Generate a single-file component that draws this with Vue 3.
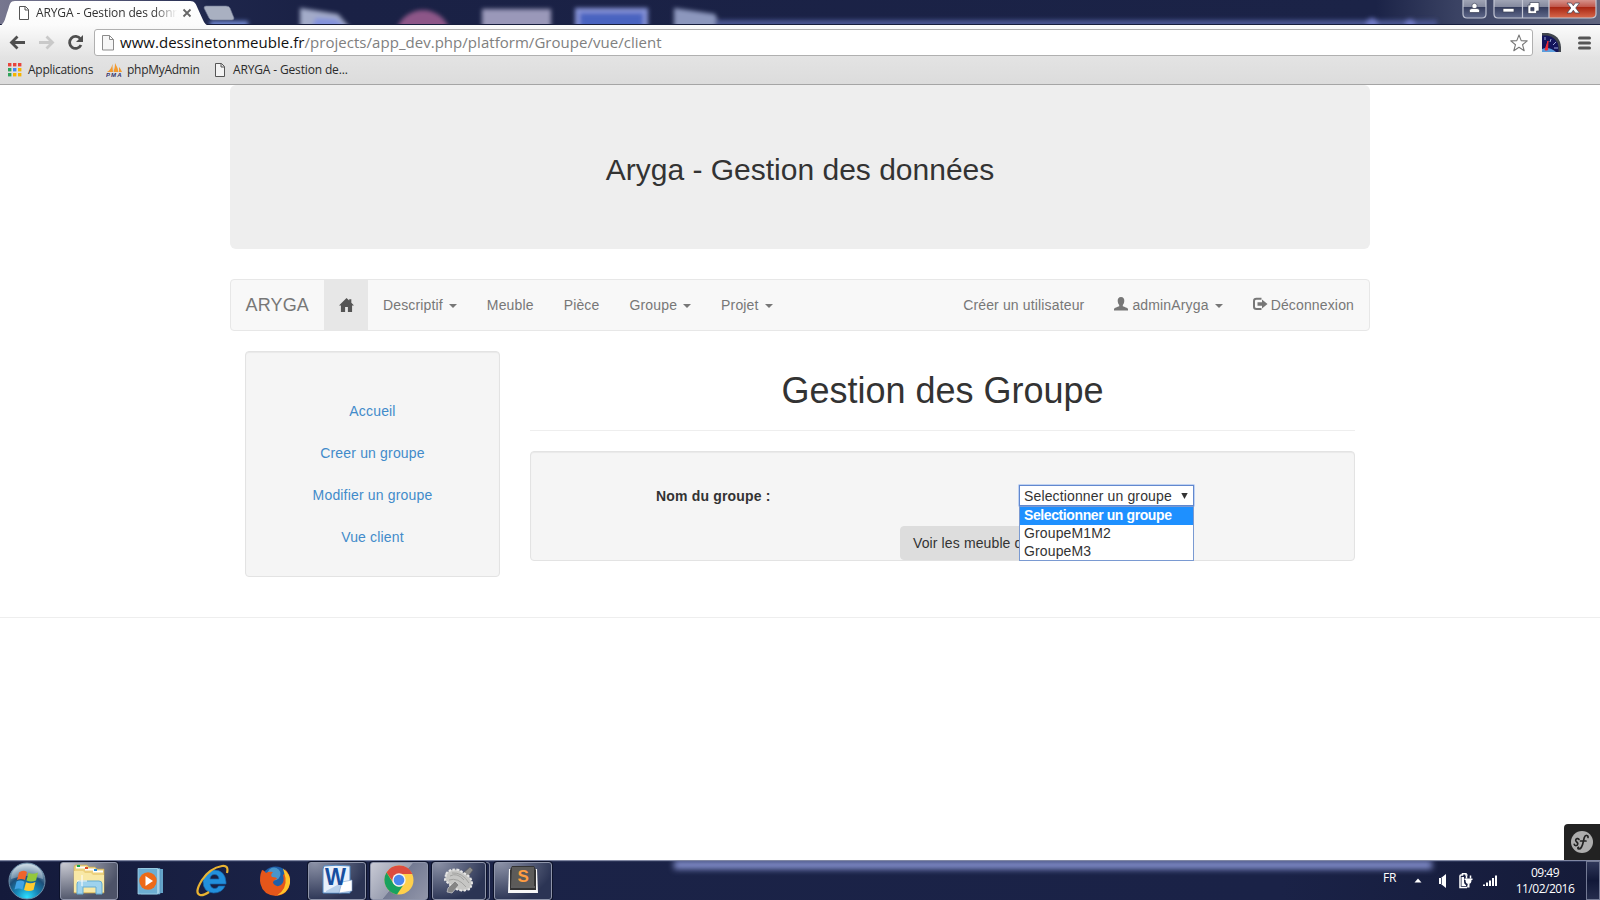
<script setup>
const links = ['Accueil', 'Creer un groupe', 'Modifier un groupe', 'Vue client']
const menus = [
  { label: 'Descriptif', caret: true },
  { label: 'Meuble', caret: false },
  { label: 'Pièce', caret: false },
  { label: 'Groupe', caret: true },
  { label: 'Projet', caret: true },
]
const options = ['Selectionner un groupe', 'GroupeM1M2', 'GroupeM3']
const appColors = ['#e8453c', '#e8453c', '#e8453c', '#2fa35a', '#4285f4', '#f5b400', '#2fa35a', '#f5b400', '#f5b400']
</script>

<template>
  <div class="screen">
    <header class="titlebar">
      <svg class="aero" width="1600" height="25" viewBox="0 0 1600 25">
        <defs>
          <linearGradient id="aeroBg" x1="0" x2="1" y1="0" y2="0">
            <stop offset="0" stop-color="#77778f" />
            <stop offset=".06" stop-color="#5b5d7c" />
            <stop offset=".13" stop-color="#1e264b" />
            <stop offset=".2" stop-color="#1a2145" />
            <stop offset=".86" stop-color="#1b2347" />
            <stop offset=".91" stop-color="#3a4263" />
            <stop offset="1" stop-color="#60657f" />
          </linearGradient>
          <filter id="soft" x="-20%" y="-50%" width="140%" height="200%"><feGaussianBlur stdDeviation="2.2" /></filter>
        </defs>
        <rect width="1600" height="25" fill="url(#aeroBg)" />
        <g filter="url(#soft)">
          <rect x="210" y="21" width="38" height="8" fill="#6f86cf" />
          <path d="M300 8 L338 14 L352 30 H300Z" fill="#a3abc9" />
          <path d="M316 18 L336 19 L348 30 H310Z" fill="#8493dc" />
          <circle cx="423" cy="38" r="28" fill="#8d5688" />
          <rect x="482" y="9" width="69" height="22" fill="#9a98b9" />
          <rect x="575" y="8" width="73" height="24" fill="#8592d6" />
          <rect x="580" y="13" width="63" height="16" fill="#4a63c0" />
          <path d="M674 8 L715 14 L722 30 H674Z" fill="#8c97bd" />
          <rect x="715" y="20" width="722" height="8" fill="#4a5590" />
          <circle cx="1372" cy="24" r="6" fill="#6e78c4" /><circle cx="1410" cy="24" r="5" fill="#6e78c4" />
        </g>
        <rect y="24" width="1600" height="1" fill="#161d3c" />
      </svg>
      <svg class="tabs" width="250" height="26" viewBox="0 0 250 26">
        <defs><linearGradient id="tabBg" x1="0" x2="0" y1="0" y2="1"><stop offset="0" stop-color="#fff" /><stop offset="1" stop-color="#fbfbfb" /></linearGradient></defs>
        <path d="M0 26 C5 23 5 18 8 10 C10 4 10 1 15 1 H190 C195 1 196 4 198 9 L203 20 Q205 25 209 26Z" fill="url(#tabBg)" />
        <path d="M206 6 H226 Q229 6 230 8 L234 18 Q234 20 232 20 H213 Q210 20 209 18 L204 8 Q204 6 206 6Z" fill="#a9b0c1" stroke="#6d7590" stroke-width=".6" />
        <path d="M19.500 6.500 H25.500 L28.500 9.500 V19.500 H19.500Z M25 6.500 V10 H28.500" fill="#fff" stroke="#555" />
        <path d="M183.500 9.500 L190.500 16.500 M190.500 9.500 L183.500 16.500" stroke="#666" stroke-width="1.800" />
      </svg>
      <span class="tab-title">ARYGA - Gestion des donn</span>
      <svg class="winctl" width="138" height="20" viewBox="0 0 138 20">
        <defs>
          <linearGradient id="glass" x1="0" x2="0" y1="0" y2="1"><stop offset="0" stop-color="#a4a8b8" /><stop offset=".42" stop-color="#84899e" /><stop offset=".43" stop-color="#343c5d" /><stop offset="1" stop-color="#60698b" /></linearGradient>
          <linearGradient id="closeBg" x1="0" x2="0" y1="0" y2="1"><stop offset="0" stop-color="#d99a94" /><stop offset=".42" stop-color="#c0564a" /><stop offset=".43" stop-color="#a82512" /><stop offset="1" stop-color="#d8694c" /></linearGradient>
        </defs>
        <path d="M2 -1 V14 Q2 18 6 18 H21 Q25 18 25 14 V-1Z" fill="url(#glass)" stroke="#bfc3d2" stroke-width="1.200" />
        <path d="M33 -1 V14 Q33 18 37 18 H130 Q135 18 135 14 V-1Z" fill="url(#glass)" />
        <path d="M88 -1 H135 V14 Q135 18 130 18 H88Z" fill="url(#closeBg)" />
        <path d="M33 -1 V14 Q33 18 37 18 H130 Q135 18 135 14 V-1 M61.500 0 V18 M88 0 V18" fill="none" stroke="#c4c7d4" stroke-width="1.200" />
        <g fill="#fff" stroke="#3c4258" stroke-width=".7">
          <circle cx="13.500" cy="6" r="2.700" /><path d="M8.500 12.500 V10.500 Q8.500 8.500 11 8.500 H16 Q18.500 8.500 18.500 10.500 V12.500Z" />
          <rect x="42" y="8.500" width="11" height="3.500" />
          <path fill-rule="evenodd" d="M69 2.500 H78 V11 H75.500 V13.500 H67 V5 H69Z M69.800 7.500 V10.800 H73 V7.500Z" />
          <path d="M106 3 H110.300 L112.300 5.800 L114.300 3 H118.500 L114.700 8 L118.500 13 H114.300 L112.300 10.200 L110.300 13 H106 L109.900 8Z" />
        </g>
      </svg>
    </header>

    <div class="toolbar">
      <div class="address-row">
        <svg class="navs" width="94" height="28" viewBox="0 0 94 28">
          <path d="M25 14.500 H12 M17.500 8.500 L11.500 14.500 L17.500 20.500" fill="none" stroke="#4f4f4f" stroke-width="2.800" />
          <path d="M39 14.500 H52 M46.500 8.500 L52.500 14.500 L46.500 20.500" fill="none" stroke="#c9c9c9" stroke-width="2.800" />
          <path d="M80.500 11 A6 6 0 1 0 81 17" fill="none" stroke="#4f4f4f" stroke-width="2.800" />
          <path d="M83 7 V14 H76Z" fill="#4f4f4f" />
        </svg>
        <div class="omnibox">
          <svg width="12" height="16" viewBox="0 0 12 16"><path d="M.5 .5 H7.500 L11.500 4.500 V15 H.5Z M7.500 .5 V4.500 H11.500" fill="#f6f6f6" stroke="#8b8b8b" /></svg>
          <span class="url"><b>www.dessinetonmeuble.fr</b>/projects/app_dev.php/platform/Groupe/vue/client</span>
          <svg class="star" width="18" height="18" viewBox="0 0 18 18"><path d="M9 1 L11.200 6.600 L17.200 6.900 L12.500 10.700 L14.200 16.700 L9 13.300 L3.800 16.700 L5.500 10.700 L.8 6.900 L6.800 6.600Z" fill="#fff" stroke="#777" stroke-width="1.100" stroke-linejoin="round" /></svg>
        </div>
        <svg class="gauge" width="19" height="19" viewBox="0 0 19 19">
          <path d="M0 0 H6 Q18 2 19 14 V19 H0Z" fill="#41464d" /><path d="M0 2.500 H5 Q15 4 16.500 14 V19 H0Z" fill="#14155c" />
          <path d="M0 16 Q7 13 14 19 H0Z" fill="#5a9ede" /><path d="M3 17 L6 8 L5.500 17Z" fill="#f22b36" stroke="#f22b36" />
          <path d="M3 4 V7 M9 6 L8 9 M14 9 L11 12 M16 15 H12" stroke="#9aa6d8" stroke-width="1" />
        </svg>
        <svg width="14" height="14" viewBox="0 0 14 14"><path d="M1.500 2 H11.500 M1.500 7 H11.500 M1.500 12 H11.500" stroke="#555" stroke-width="3" stroke-linecap="round" /></svg>
      </div>
      <div class="bookmarks">
        <svg width="14" height="14" viewBox="0 0 14 14"><rect v-for="(c, i) in appColors" :key="i" :x="(i % 3) * 5" :y="Math.floor(i / 3) * 5" width="3.400" height="3.400" :fill="c" /></svg>
        <span class="bm-apps">Applications</span>
        <svg class="pma" width="17" height="15" viewBox="0 0 17 15">
          <path d="M1 9 Q5 7 6.500 1 L7 9Z M7 9 Q9 6 9 0 Q12 5 12.500 9Z M13 9 L13 4 Q15 6 16 9Z" fill="#f39a2d" />
          <path d="M6.500 1 L8 9 H7Z" fill="#c9c9c9" />
          <text x="0" y="14.300" class="pma-text" textLength="15.500">PMA</text>
        </svg>
        <span class="bm-pma">phpMyAdmin</span>
        <svg width="10" height="14" viewBox="0 0 10 14"><path d="M.5 .5 H6.500 L9.500 3.500 V13.500 H.5Z M6 .5 V4 H9.500" fill="#f3f3f3" stroke="#555" /></svg>
        <span class="bm-page">ARYGA - Gestion de...</span>
      </div>
    </div>

    <main class="page">
      <div class="container">
        <div class="jumbotron"><h2>Aryga - Gestion des données</h2></div>
        <nav class="navbar">
          <a class="brand">ARYGA</a>
          <a class="home"><svg width="15" height="14" viewBox="0 0 14 14" preserveAspectRatio="none"><path d="M7 0 L9.500 2.600 V1.200 H11.500 V4.700 L14 7.400 H12.200 V14 H8.300 V9 H5.700 V14 H1.800 V7.400 H0Z" fill="#555" /></svg></a>
          <a v-for="m in menus" :key="m.label">{{ m.label }}<i v-if="m.caret" class="caret"></i></a>
          <a class="right">Créer un utilisateur</a>
          <a><svg class="glyph" width="14" height="14" viewBox="0 0 14 14"><path d="M7 0 C9.400 0 10.500 1.700 10.300 4 C10.200 6 9.500 7.200 8.800 8 V9.300 C10.500 10.200 13.600 10.700 14 12 V13.500 H0 V12 C.4 10.700 3.500 10.200 5.200 9.300 V8 C4.500 7.200 3.800 6 3.700 4 C3.500 1.700 4.600 0 7 0Z" fill="#777" /></svg>adminAryga<i class="caret"></i></a>
          <a class="logout"><svg class="glyph" width="15" height="14" viewBox="0 0 15 14"><path d="M8.500 1.800 H3.500 Q1 1.800 1 4 V9.800 Q1 12 3.500 12 H8.500" fill="none" stroke="#777" stroke-width="2" /><path d="M4.500 5.200 H9 V2.500 L14.500 7 L9 11.500 V8.800 H4.500Z" fill="#777" /></svg>Déconnexion</a>
        </nav>
        <div class="columns">
          <aside class="well side"><a v-for="l in links" :key="l">{{ l }}</a></aside>
          <section class="content">
            <h1>Gestion des Groupe</h1>
            <form class="well group-form">
              <div class="field">
                <label>Nom du groupe :</label>
                <div class="select">
                  <span>Selectionner un groupe</span>
                  <svg width="7" height="6" viewBox="0 0 7 6"><path d="M.3 0 H6.700 L3.500 6Z" fill="#333" /></svg>
                  <ul class="options"><li v-for="(o, i) in options" :key="o" :class="{ active: i === 0 }">{{ o }}</li></ul>
                </div>
              </div>
              <button type="button" class="submit">Voir les meuble d</button>
            </form>
          </section>
        </div>
      </div>
      <hr />
      <div class="symfony">
        <svg width="24" height="24" viewBox="0 0 24 24"><circle cx="12" cy="12" r="11" fill="#adadad" /><path d="M9 9.500 C8.500 7.800 5.500 8.500 5.700 10.500 C5.900 12 8 12.200 7.800 14 C7.500 16.300 4.300 16 4.200 14.300 M18 7.500 C18.500 5 15.300 4.600 14.300 7.500 C13.300 10.500 12.800 19 9 19 C7.500 19 7.600 17.500 8.500 17.400 M10.500 11 H16" fill="none" stroke="#222" stroke-width="1.700" stroke-linecap="round" /></svg>
      </div>
    </main>

    <footer class="taskbar">
      <div class="glow"></div>
      <svg class="orb" width="38" height="38" viewBox="0 0 38 38">
        <defs><radialGradient id="orbBg" cx=".5" cy=".95" r=".9"><stop offset="0" stop-color="#2ee0ff" /><stop offset=".35" stop-color="#1787b8" /><stop offset=".65" stop-color="#1d4e78" /><stop offset="1" stop-color="#b5cad8" /></radialGradient></defs>
        <circle cx="19" cy="19" r="18" fill="url(#orbBg)" stroke="#6d8ea8" />
        <path d="M3 17 Q4 3 19 2 Q34 3 35 17 Q19 11 3 17Z" fill="#fff" opacity=".28" />
        <path d="M11 10.500 Q15 7.500 19 10 L17 18 Q13 16 9 18Z" fill="#f0642b" /><path d="M20.500 10.800 Q25 13 30 10.500 L28 18.500 Q23 20.500 18.500 18.500Z" fill="#94c83d" />
        <path d="M8.500 19.500 Q12.500 17.500 16.500 19.800 L14.500 27.500 Q10.500 25.500 6.500 27.500Z" fill="#40a3e5" /><path d="M18 20.300 Q22.500 22.500 27.500 20 L25.500 28 Q21 30 16 28Z" fill="#ffcb2e" />
      </svg>
      <div class="task lit explorer">
        <svg width="34" height="31" viewBox="0 0 34 31"><path d="M2 3 L3 1 H15 L17 3 H23 L25 5 H32 V29 H2Z" fill="#ecd17e" stroke="#c8a850" stroke-width=".6" /><path d="M4 3.500 H14 M13 5.500 H23 M21 7.500 H31" stroke="#fff" stroke-width="2" /><path d="M5 2 H8" stroke="#11a846" stroke-width="2" /><path d="M13 4 H16" stroke="#df4a27" stroke-width="2" /><path d="M22 6 H25" stroke="#2487d8" stroke-width="2" /><path d="M2 7 L11 7 L13 9 H19 L21 11 H32 V28 H2Z" fill="#f8e8a5" /><path d="M5 30 V20 Q5 17 8 17 H27 Q30 17 30 20 V30 H24 V23 H11 V30Z" fill="#9ed2ed" stroke="#64abd1" /><path d="M10 11 V22 M5 17 H15" stroke="#fff" /></svg>
      </div>
      <svg class="media" width="28" height="28" viewBox="0 0 28 28"><path d="M7 2 H26 V26 H7Z" fill="#65a4c9" /><path d="M4 1.500 H23 V27 H4Z" fill="#a5d1e8" stroke="#4f91bb" stroke-width=".7" /><path d="M1 1.500 H20.500 V27 H1Z" fill="#6daed2" stroke="#a4d3e9" stroke-width=".8" /><circle cx="11" cy="14" r="8.700" fill="#ed6a18" /><path d="M8.500 9 L16 14 L8.500 19Z" fill="#fff" /></svg>
      <svg class="ie" width="34" height="33" viewBox="0 0 34 33"><path d="M29 22 Q26 29 17.500 29 Q7 28 7 17.500 Q8 7 18 6 Q29 6 30 18 V20 H14 Q15 24.500 19 24.500 Q21.500 24.500 22.500 22Z M14 15 H23 Q22.500 10.500 18.500 10.500 Q14.500 10.500 14 15Z" fill="#2290dc" fill-rule="evenodd" stroke="#1665ac" stroke-width=".7" /><path d="M31 9 Q33 1 26 2 Q14 4 6 16 Q-2 29 4 31 Q7 32 13 28" fill="none" stroke="#e9b332" stroke-width="2.200" /></svg>
      <svg class="firefox" width="32" height="32" viewBox="0 0 32 32"><circle cx="16.500" cy="15.500" r="14" fill="#1f5fa8" /><circle cx="15" cy="9" r="6.500" fill="#5aacda" opacity=".7" /><path d="M3 5 Q5 5 7 8 Q10 6 14 7 Q11 10 13 12 Q18 12 18 14 Q14 15 14 18 Q17 23 22 20 Q26 17 24 10 L27 8 L26 4 Q32 10 31 18 Q29 30 17 31 Q4 30 1.500 19 Q0 12 3 5Z" fill="#e5561a" /><path d="M24 3.500 Q32 9 31 18 Q29 29 18 30.500 Q28 24 26.500 13Z" fill="#ffc52b" /></svg>
      <div class="task word">
        <svg width="32" height="32" viewBox="0 0 32 32"><path d="M3 2 Q14 .5 29 2 V29 H2 V5Z" fill="#e9f1fb" stroke="#5089c4" /><path d="M5 27 L22 18 L29 20 V28 L5 28Z" fill="#b6cfea" /><path d="M21 18 L31 16 V27 L18 29Z" fill="#fff" stroke="#7fa3d0" stroke-width=".6" /><text x="4" y="21" class="word-w" textLength="21" lengthAdjust="spacingAndGlyphs">W</text></svg>
      </div>
      <div class="task lit chrome">
        <svg width="30" height="30" viewBox="0 0 30 30"><circle cx="15" cy="15" r="14.500" fill="#ffd04c" /><path d="M15 .5 A14.500 14.500 0 0 1 28.500 9 H15 A6 6 0 0 0 9.500 17.500 L2.500 7.500 A14.500 14.500 0 0 1 15 .5Z" fill="#dc4c3f" /><path d="M2.500 7.500 L9.500 18.500 Q13 23 19 20.500 L13 29.400 A14.500 14.500 0 0 1 2.500 7.500Z" fill="#19a15f" /><circle cx="15" cy="15" r="6.700" fill="#f3f3f3" /><circle cx="15" cy="15" r="5.300" fill="#4a87ee" /></svg>
      </div>
      <div class="task gear">
        <svg width="32" height="30" viewBox="0 0 32 30"><path d="M18 10 L27 2 L30 5 L23 14Z" fill="#8b8b8b" stroke="#555" stroke-width=".6" /><path d="M3 9 Q7 3 16 5 L24 10 Q29 13 29 19 L27 24 L20 26 Q10 24 7 20 L2 15Z" fill="#c6c6c4" stroke="#e6e6e6" stroke-width="2" stroke-dasharray="2.500 1.500" /><path d="M7 11 Q14 7 21 15 M6 15 Q15 12 23 22 M9 8 Q19 7 26 18" fill="none" stroke="#a2a2a0" /><path d="M12 16 L16 20 L9 28 L4 27 L5 23Z" fill="#858585" stroke="#ddd" stroke-width=".6" /></svg>
      </div>
      <div class="stack-edge"></div>
      <div class="task sublime">
        <svg width="32" height="30" viewBox="0 0 32 30"><path d="M2 4 H30 L31 28 H1Z" fill="#f7f7f7" /><path d="M5 1 H27 L29 5 V25 H3 V5Z" fill="#333" /><path d="M5 2 H27 V21 H4Z" fill="#5c5b59" /><path d="M4 22 H28" stroke="#888" /><text x="10.500" y="17" class="subl-s">S</text></svg>
      </div>
      <div class="tray">
        <span class="lang">FR</span>
        <svg class="up" width="8" height="5" viewBox="0 0 8 5"><path d="M4 .5 L7.500 4.500 H.5Z" fill="#fff" /></svg>
        <svg class="speaker" width="9" height="14" viewBox="0 0 9 14"><path d="M0 4 H2 L7 0 V14 L2 10 H0Z" fill="#fff" /><path d="M2.500 4 V10" stroke="#27304e" stroke-width=".8" /></svg>
        <svg class="battery" width="14" height="16" viewBox="0 0 14 16"><path d="M2 2 H3.500 V.8 H7 V2 H8.500 M2 2 Q1 2 1 3 V14.500 H8" fill="none" stroke="#fff" stroke-width="1.500" /><path d="M2.500 4 H5 V8 Q5 11.500 7 12 V13 H2.500Z" fill="#fff" /><path d="M7.500 2.500 V5.500 M11.500 2.500 V5.500" stroke="#fff" stroke-width="1.500" /><path d="M5.500 5.500 H13.500 V7 H12.500 Q12.500 11 9.500 11 Q6.500 11 6.500 7 H5.500Z M9 10 H10.500 V14.500 H8Z" fill="#fff" /></svg>
        <svg class="signal" width="15" height="12" viewBox="0 0 15 12"><path d="M0 9.500 H2 V11 H0Z M3 7.500 H5 V11 H3Z M6 5.500 H8 V11 H6Z M9 3 H11 V11 H9Z M12 .5 H14 V11 H12Z" fill="#fff" /></svg>
        <div class="clock"><span>09:49</span><span>11/02/2016</span></div>
        <div class="show-desktop"></div>
      </div>
    </footer>
  </div>
</template>

<style>
html, body { margin: 0; overflow: hidden; background: #fff; }
</style>

<style scoped>
* { box-sizing: border-box; }
.screen { width: 1600px; height: 900px; display: flex; flex-direction: column; overflow: hidden; background: #fff; font: 14px/20px "Liberation Sans", Arial, sans-serif; color: #333; }
svg { display: block; flex: none; }
.titlebar { position: relative; height: 25px; flex: none; }
.aero, .tabs { position: absolute; left: 0; top: 0; }
.winctl { position: absolute; left: 1461px; top: 0; }
.tab-title { position: absolute; left: 36px; top: 4px; width: 146px; white-space: nowrap; font: 12px/18px "Open Sans", sans-serif; letter-spacing: -.12px; color: #333; -webkit-mask-image: linear-gradient(90deg, #000 118px, transparent 141px); mask-image: linear-gradient(90deg, #000 118px, transparent 141px); }
.toolbar { position: relative; height: 60px; flex: none; background: linear-gradient(#fbfbfb, #e3e3e3 55%, #dcdcdc); border-bottom: 1px solid #a5a5a5; }
.address-row { display: flex; align-items: center; height: 35px; }
.navs { margin-top: -1px; }
.omnibox { display: flex; align-items: center; width: 1439px; height: 27px; padding: 0 4px 0 7px; background: #fff; border: 1px solid #b0b0b0; border-radius: 3px; }
.url { margin: -2px 0 0 6px; font: 15px/22px "Open Sans", sans-serif; letter-spacing: .035px; color: #808080; white-space: nowrap; }
.url b { font-weight: 400; color: #111; }
.star { margin-left: auto; }
.gauge { margin: 0 17px 0 9px; }
.bookmarks { display: flex; align-items: center; height: 20px; padding-left: 8px; font: 12px/18px "Open Sans", sans-serif; color: #2b2b2b; white-space: nowrap; }
.bm-apps { width: 72px; margin-left: 6px; letter-spacing: -.27px; }
.pma { margin-left: 6px; }
.pma-text { font: italic bold 6px "Liberation Sans", sans-serif; fill: #33336b; }
.bm-pma { width: 78px; margin-left: 4px; margin-right: 10px; letter-spacing: -.28px; }
.bm-page { margin-left: 8px; letter-spacing: -.15px; }
.page { position: relative; flex: 1; }
.container { width: 1140px; margin: 0 auto; height: 532px; }
.jumbotron { display: flex; align-items: center; justify-content: center; height: 164px; padding-top: 6px; border-radius: 6px; background: #eee; }
.jumbotron h2 { margin: 0; font-size: 30px; line-height: 34px; font-weight: 400; }
.navbar { display: flex; height: 52px; margin-top: 30px; border: 1px solid #e7e7e7; border-radius: 4px; background: #f8f8f8; color: #777; letter-spacing: .15px; }
.navbar a { display: flex; align-items: center; padding: 0 15px; white-space: nowrap; }
.navbar .brand { width: 93px; padding-left: 14.5px; font-size: 18px; }
.navbar .home { width: 44px; background: #e7e7e7; }
.navbar .right { margin-left: auto; }
.glyph { margin-right: 4px; margin-top: -2px; }
.logout .glyph { margin-right: 3px; }
.caret { width: 0; height: 0; margin-left: 6px; margin-top: 2px; border: 4px solid transparent; border-top-color: #777; border-bottom: 0; }
.columns { display: flex; gap: 30px; margin-top: 20px; padding: 0 15px; }
.well { background: #f5f5f5; border: 1px solid #e3e3e3; border-radius: 4px; box-shadow: inset 0 1px 1px rgba(0, 0, 0, .05); }
.side { width: 255px; height: 226px; padding-top: 38px; display: flex; flex-direction: column; letter-spacing: .17px; }
.side a { height: 42px; line-height: 42px; text-align: center; color: #428bca; }
.content { width: 825px; }
.content h1 { margin: 20px 0; padding-bottom: 20px; height: 60px; border-bottom: 1px solid #eee; font-size: 36px; line-height: 40px; font-weight: 400; text-align: center; }
.group-form { height: 110px; margin: 0; padding: 33px 160px 0 125px; }
.field { display: flex; justify-content: space-between; height: 41px; }
.field label { font-weight: 700; line-height: 23px; letter-spacing: .18px; }
.select { position: relative; z-index: 1; display: flex; justify-content: space-between; align-items: center; width: 175px; height: 21px; padding: 1px 5px 0 4px; background: #fff; border: 1px solid #6288ce; box-shadow: 0 0 0 .5px rgba(111, 158, 236, .8); white-space: nowrap; letter-spacing: .14px; }
.options { position: absolute; left: -1px; top: 20px; width: 175px; height: 55px; margin: 0; padding: 0; list-style: none; background: #fff; border: 1px solid #7a9ad2; }
.options li { height: 18px; line-height: 17px; padding-left: 4px; }
.options .active { background: #1e90ff; color: #fff; font-weight: 700; letter-spacing: -.4px; }
.submit { display: block; width: 160px; height: 34px; margin-left: 244px; padding: 0 12px; border: 1px solid #ddd; border-radius: 4px; background: #ddd; font: 14px/20px "Liberation Sans", Arial, sans-serif; letter-spacing: .12px; color: #333; text-align: left; }
hr { margin: 0; border: 0; border-top: 1px solid #eee; }
.symfony { position: absolute; right: 0; bottom: 0; display: flex; align-items: center; justify-content: center; width: 36px; height: 36px; background: #222; border-top-left-radius: 4px; }
.taskbar { position: relative; display: flex; align-items: center; flex: none; height: 40px; background: linear-gradient(90deg, #141a3b, #1b2347 20%, #1a2247 80%, #151b39); border-top: 1px solid #8087a3; box-shadow: inset 0 1px #2b3457; }
.glow { position: absolute; left: 674px; top: 0; width: 758px; height: 8px; background: #8995d4; filter: blur(3px); clip-path: inset(0 -12px -12px -12px); }
.orb { margin-left: 8px; }
.task { position: relative; display: flex; align-items: center; justify-content: center; flex: none; width: 58px; height: 38px; border: 1px solid #8f95aa; border-radius: 3px; background: radial-gradient(ellipse at 10% 0, #8b91a6, transparent 75%), #2b3454; box-shadow: 0 0 0 1px #0d132b; }
.task svg { margin-top: -2px; }
.lit { background: linear-gradient(130deg, #c8cad5, #9a9fb1 48%, #737a93 49%, #9296a9); }
.explorer { margin-left: 14px; background: radial-gradient(ellipse at 5% 0, #c9cad2, transparent 75%), #4d5368; }
.media { margin-left: 19px; }
.ie { margin-left: 31px; }
.firefox { margin-left: 29px; }
.word { margin-left: 17px; }
.word-w { font: bold 23px "Liberation Sans", sans-serif; fill: #174f9f; }
.chrome { margin-left: 4px; }
.gear { width: 54px; margin-left: 4px; }
.stack-edge { width: 4px; height: 38px; border: 1px solid #7e859b; border-left: 0; border-radius: 0 3px 3px 0; }
.sublime { margin-left: 4px; }
.subl-s { font: bold 17px "Liberation Sans", sans-serif; fill: #ff9d42; }
.tray { position: relative; display: flex; align-items: center; margin-left: auto; height: 39px; color: #fff; font: 12px/16px "Open Sans", sans-serif; letter-spacing: -.5px; }
.lang { width: 31px; margin-top: -5px; letter-spacing: -.2px; }
.up { margin-right: 17px; }
.speaker { margin-right: 11px; }
.battery { margin-right: 10px; }
.signal { margin-right: 17px; }
.clock { display: flex; flex-direction: column; align-items: center; width: 60px; margin-right: 11px; }
.show-desktop { width: 14px; height: 39px; border: 1px solid #737a94; background: linear-gradient(#30385a, #111838 50%, #252d4d); }
</style>
